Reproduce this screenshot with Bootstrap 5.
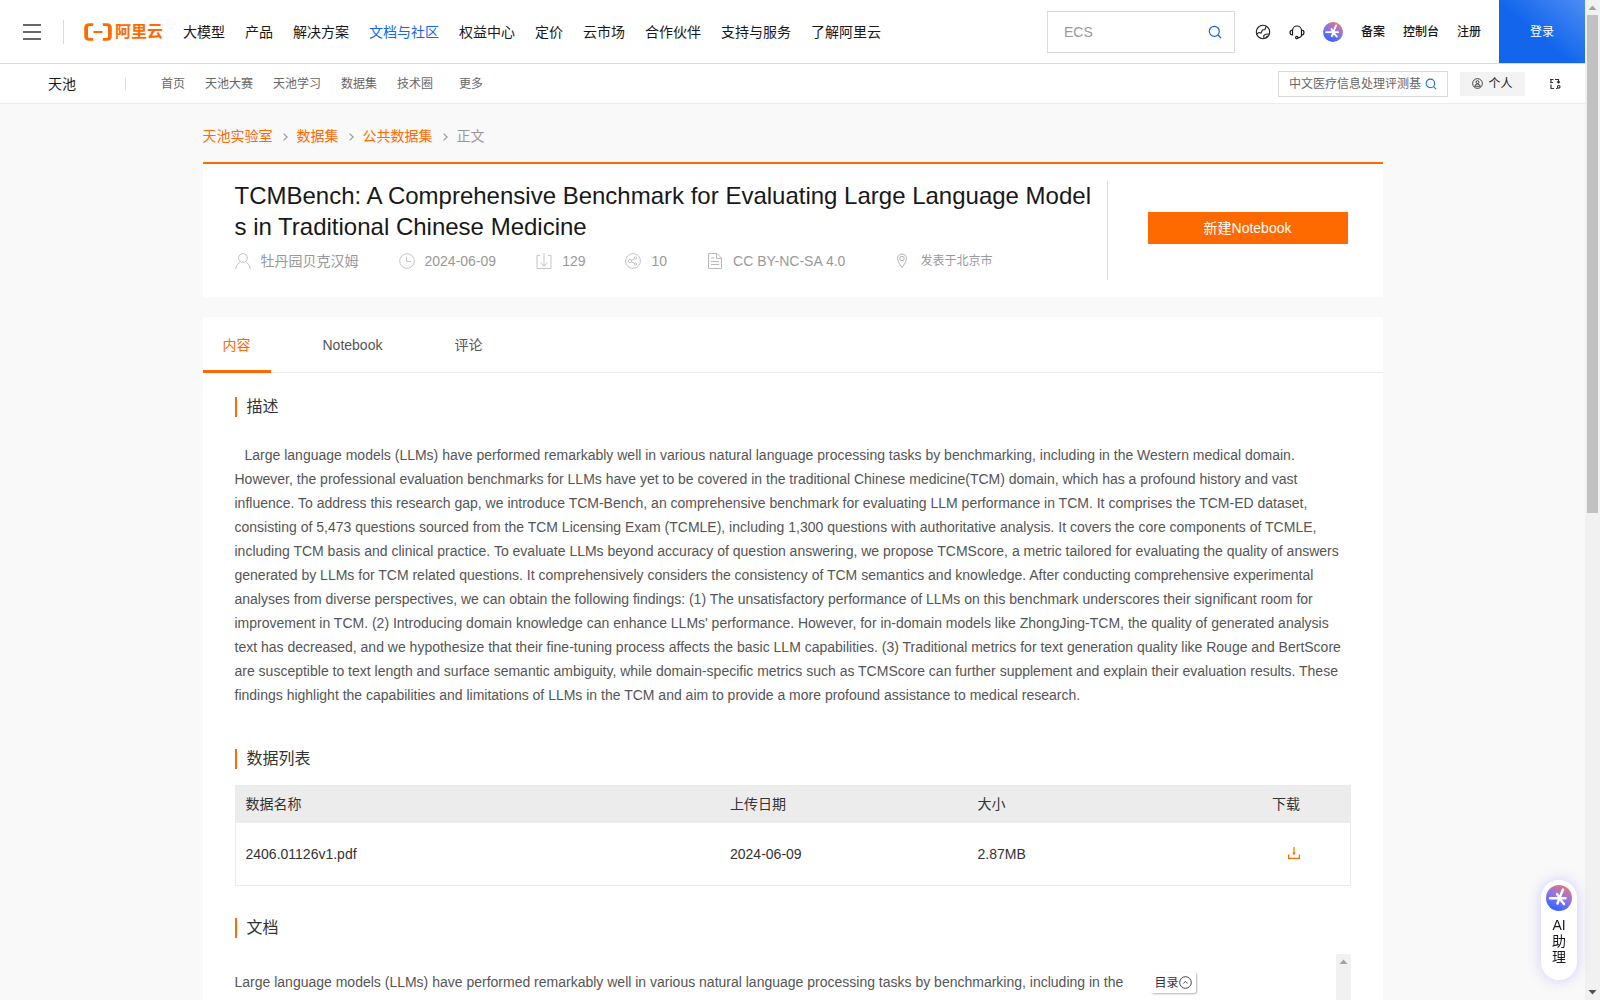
<!DOCTYPE html>
<html lang="zh-CN">
<head>
<meta charset="utf-8">
<meta name="viewport" content="width=device-width, initial-scale=1">
<title>TCMBench - 天池数据集</title>
<link href="https://cdn.jsdelivr.net/npm/bootstrap@5.3.0/dist/css/bootstrap.min.css" rel="stylesheet">
<style>
:root { --brand: #ff6a00; --blue: #1366ec; }
body { font-family: "Liberation Sans", "Noto Sans CJK SC", sans-serif; font-size: 14px; line-height: 24px; color: #181818; background: #fff; }
a { text-decoration: none; color: inherit; }
svg { display: block; flex: none; }
.view { background: #f9f9f9; min-width: 0; }
.rail { width: 15px; background: #f1f1f1; flex: none; }
.rail-thumb { width: 11px; height: 498px; background: #c1c1c1; }
.rail-cap { height: 15px; width: 15px; }
.topbar { height: 64px; border-bottom: 1px solid #d9d9d9; }
.menu-btn { padding: 0; border: 0; background: none; margin: 0 22px 0 23px; }
.sep-top { width: 1px; height: 24px; background: #d9d9d9; margin-right: 20px; }
.logo { color: var(--brand); font-size: 16px; font-weight: 700; gap: 3px; margin-right: 20px; }
.main-menu { gap: 20px; white-space: nowrap; }
.main-menu .current { color: var(--blue); }
.find { border: 1px solid #d9d9d9; background: #fff; }
.find input { border: 0; outline: 0; padding: 0; min-width: 0; background: none; flex: 1; }
.find button, .tool-btn { border: 0; background: none; padding: 0; }
.find input::placeholder { color: #999; opacity: 1; }
.find-top { width: 188px; height: 42px; padding: 0 12px 0 16px; }
.find-sub { width: 170px; height: 26px; padding: 0 10px; font-size: 12px; gap: 4px; }
.find-sub input::placeholder { color: #666; }
.quick { gap: 18px; font-size: 12px; font-weight: 500; margin: 0 18px 0 20px; }
.login { width: 86px; font-size: 12px; color: #fff; background: linear-gradient(40deg, var(--blue) 45%, #4d8cf4); }
.subbar { height: 40px; border-bottom: 1px solid #ebebeb; padding: 0 24px 0 48px; font-size: 12px; }
.subbar h2 { font-size: 14px; font-weight: 400; line-height: 24px; width: 77px; }
.sep-sub { width: 1px; height: 12px; background: #d9d9d9; margin-right: 35px; }
.sub-menu { gap: 20px; color: #666; }
.sub-menu .more { margin-left: 6px; }
.mine { width: 65px; height: 24px; background: #f3f3f3; border: 0; font-size: 12px; gap: 5px; margin: 0 24px 0 12px; color: #181818; }
.wrap { max-width: 1180px; }
.crumbs { color: #999; height: 58px; padding-top: 5px; }
.crumbs a { color: var(--brand); }
.crumbs svg { margin: 2px 9px 0 10px; }
.sheet { background: #fff; }
.hero { border-top: 2px solid var(--brand); padding: 17px 35px 17px 32px; height: 135px; margin-bottom: 20px; }
.hero h1 { font-size: 24px; line-height: 31px; font-weight: 400; word-break: break-all; margin: -1px 0 9px; }
.hero-side { border-left: 1px solid #e0e0e0; width: 241px; padding-bottom: 6px; }
.hero-main { padding-right: 14px; }
.new-btn { width: 200px; height: 32px; background: var(--brand); border: 0; color: #fff; }
.facts { gap: 40px; color: #999; line-height: 20px; white-space: nowrap; }
.facts > span { display: flex; align-items: center; gap: 10px; }
.facts .place { font-size: 12px; margin-left: 9px; }
.tabs { border-bottom: 1px solid #ebebeb; height: 56px; gap: 32px; }
.tabs button { border: 0; background: none; color: #555; padding: 0 20px; height: 56px; border-bottom: 3px solid transparent; border-top: 3px solid transparent; }
.tabs .on { color: var(--brand); border-bottom-color: var(--brand); }
.inner { padding: 24px 32px 0; }
.title { font-size: 16px; line-height: 20px; font-weight: 400; color: #333; border-left: 2px solid var(--brand); padding-left: 10px; margin: 0; }
.prose { color: #555; margin: 0; }
.abstract { text-indent: 10px; margin: 26px 0 42px; }
.files { border: 1px solid #ebebeb; margin: 16px 0 32px; color: #333; table-layout: fixed; width: 100%; }
.files th { font-weight: 400; background: #ececec; height: 37px; padding: 0 10px; }
.files td { height: 63px; padding: 0 10px; }
.doc { margin-top: 16px; height: 600px; overflow: hidden; }
.doc-text { padding-top: 16px; }
.doc-side { width: 196px; padding: 18px 0 0 11px; flex: none; }
.toc { border: 0; border-radius: 2px; background: #fff; width: 45px; height: 21px; padding: 0; font-size: 12px; line-height: 20px; color: #333; box-shadow: 1px 1px 2px rgba(0,0,0,.3); }
.helper { position: fixed; right: 23px; bottom: 20px; width: 36px; height: 100px; border-radius: 18px; border: 0; background: #fff; padding: 5px 0 0; line-height: 16px; color: #181818; box-shadow: 0 0 14px rgba(110,100,255,.3); }
.helper span { width: 14px; margin-top: 6px; }
</style>
<script src="https://cdn.jsdelivr.net/npm/bootstrap@5.3.0/dist/js/bootstrap.bundle.min.js"></script>
</head>
<body>
<svg width="0" height="0" class="position-absolute" aria-hidden="true">
  <defs>
    <linearGradient id="ball" x1=".3" y1="1" x2=".75" y2="0"><stop offset="0" stop-color="#2b62ff"/><stop offset=".5" stop-color="#8a74ee"/><stop offset="1" stop-color="#e8776f"/></linearGradient>
    <symbol id="lens" viewBox="0 0 14 14"><circle cx="6.3" cy="6.3" r="5" fill="none" stroke="#1366ec" stroke-width="1.2"/><path d="M10 10l3 3" stroke="#1366ec" stroke-width="1.2"/></symbol>
    <symbol id="spark" viewBox="0 0 26 26"><circle cx="13" cy="13" r="13" fill="url(#ball)"/><path d="M4 13.200h15.500M17 4.500l-3.500 8.500M11 9l2.500 4-2 5.500M13.500 13.500l4.500 5.500" fill="none" stroke="#fff" stroke-width="2.400" stroke-linecap="round"/></symbol>
  </defs>
</svg>
<div class="d-flex vh-100 overflow-hidden">
  <div class="view flex-grow-1 overflow-hidden">
    <header class="topbar d-flex align-items-center bg-white">
      <button class="menu-btn" type="button" aria-label="菜单"><svg width="18" height="18" viewBox="0 0 18 18"><path d="M0 2h18M0 9h18M0 16h18" stroke="#666" stroke-width="2"/></svg></button>
      <span class="sep-top"></span>
      <a href="#" class="logo d-flex align-items-center"><svg width="28" height="18" viewBox="0 0 28 18"><path d="M9.500.2L8.800 3H5.500Q4 3 4 4.500v9Q4 15 5.500 15h3.300l.7 2.800H5Q.2 17.800.2 13V5Q.2.2 5 .2zM18.500.2l.7 2.800h3.300Q24 3 24 4.500v9q0 1.500-1.500 1.500h-3.300l-.7 2.800H23q4.800 0 4.800-4.800V5Q27.800.2 23 .2z" fill="#ff6a00"/><path d="M9.500 9h9" stroke="#ff6a00" stroke-width="2"/></svg><span>阿里云</span></a>
      <nav class="main-menu d-flex">
        <a href="#">大模型</a><a href="#">产品</a><a href="#">解决方案</a><a href="#" class="current">文档与社区</a><a href="#">权益中心</a><a href="#">定价</a><a href="#">云市场</a><a href="#">合作伙伴</a><a href="#">支持与服务</a><a href="#">了解阿里云</a>
      </nav>
      <form class="find find-top d-flex align-items-center ms-auto"><input type="text" placeholder="ECS" aria-label="搜索"><button type="button" aria-label="搜索"><svg width="14" height="14"><use href="#lens"/></svg></button></form>
      <div class="quick d-flex align-items-center">
        <a href="#" aria-label="语言"><svg width="16" height="16" viewBox="0 0 16 16" fill="none" stroke="#222" stroke-width="1.100"><circle cx="8" cy="8" r="6.700"/><path d="M1.500 10l2.500-1.500 2 .5 1.500-3 2.500-.5 1-3M9 14.500l-.3-2.700 1.800-1.600 3.500-.2M11 13.500l1.500-1.500"/></svg></a>
        <a href="#" aria-label="支持"><svg width="16" height="16" viewBox="0 0 16 16" fill="none" stroke="#181818" stroke-width="1.200"><path d="M3.500 6.500a4.500 4.500 0 0 1 9 0M3.500 6v5Q1 11 1 8.500T3.500 6M12.500 6v5q2.500 0 2.500-2.500T12.500 6M12.500 11q0 2.500-3.500 2.800"/><circle cx="7.800" cy="13.500" r="1.200"/></svg></a>
        <a href="#" aria-label="AI 助理"><svg width="20" height="20"><use href="#spark"/></svg></a>
        <a href="#">备案</a><a href="#">控制台</a><a href="#">注册</a>
      </div>
      <a href="#" class="login d-flex align-items-center justify-content-center align-self-stretch">登录</a>
    </header>
    <div class="subbar d-flex align-items-center bg-white">
      <h2 class="m-0">天池</h2><span class="sep-sub"></span>
      <nav class="sub-menu d-flex"><a href="#">首页</a><a href="#">天池大赛</a><a href="#">天池学习</a><a href="#">数据集</a><a href="#">技术圈</a><a href="#" class="more">更多</a></nav>
      <form class="find find-sub d-flex align-items-center ms-auto"><input type="text" placeholder="中文医疗信息处理评测基准" aria-label="站内搜索"><button type="button" aria-label="站内搜索"><svg width="12" height="12"><use href="#lens"/></svg></button></form>
      <button class="mine d-flex align-items-center justify-content-center p-0" type="button"><svg width="11" height="11" viewBox="0 0 12 12" fill="none" stroke="#333"><circle cx="6" cy="6" r="5.300"/><circle cx="6" cy="4.500" r="1.600"/><path d="M3 9q.5-2.500 3-2.500T9 9z"/></svg>个人</button>
      <button class="tool-btn" type="button" aria-label="切换"><svg width="12" height="12" viewBox="0 0 12 12" fill="none" stroke="#333" stroke-width="1.200"><path d="M1 1.500h3.500M2 1.500V5M1 4.500h3M2 6.500v4h3M6 1.500h3.500V5M8 3.500l1.500 1.500L11 3.500M7 10.500h1.500"/><circle cx="9.700" cy="8.800" r="1.300"/></svg></button>
    </div>
    <main class="wrap mx-auto">
      <nav class="crumbs d-flex align-items-center" aria-label="路径">
        <a href="#">天池实验室</a><svg width="5" height="8" viewBox="0 0 5 8"><path d="M.6.600L4.200 4 .6 7.400" fill="none" stroke="#999" stroke-width="1.200"/></svg>
        <a href="#">数据集</a><svg width="5" height="8" viewBox="0 0 5 8"><path d="M.6.600L4.200 4 .6 7.400" fill="none" stroke="#999" stroke-width="1.200"/></svg>
        <a href="#">公共数据集</a><svg width="5" height="8" viewBox="0 0 5 8"><path d="M.6.600L4.200 4 .6 7.400" fill="none" stroke="#999" stroke-width="1.200"/></svg>
        <span>正文</span>
      </nav>
      <section class="sheet hero d-flex">
        <div class="hero-main flex-grow-1">
          <h1>TCMBench: A Comprehensive Benchmark for Evaluating Large Language Models in Traditional Chinese Medicine</h1>
          <div class="facts d-flex">
            <span><svg width="16" height="16" viewBox="0 0 16 16" fill="none" stroke="#c4c4c4"><circle cx="8" cy="5" r="4.400"/><path d="M.6 16q.4-5 4.600-7M15.400 16q-.4-5-4.600-7"/></svg>牡丹园贝克汉姆</span>
            <span><svg width="16" height="16" viewBox="0 0 16 16" fill="none" stroke="#c4c4c4"><circle cx="8" cy="8" r="7.300"/><path d="M7.500 3.500v5h4.500"/></svg>2024-06-09</span>
            <span><svg width="16" height="16" viewBox="0 0 16 16" fill="none" stroke="#c4c4c4"><path d="M4 2.500H1v13h14v-13h-3M8 0v13M4.500 9.500L8 13l3.500-3.500"/></svg>129</span>
            <span><svg width="16" height="16" viewBox="0 0 16 16" fill="none" stroke="#c4c4c4"><circle cx="8" cy="8" r="7.400"/><circle cx="5" cy="8" r="1.700"/><circle cx="10.500" cy="5" r="1.200"/><circle cx="10.500" cy="11" r="1.200"/><path d="M6.500 7.200l3-1.600M6.500 8.800l3 1.600"/></svg>10</span>
            <span><svg width="16" height="16" viewBox="0 0 16 16" fill="none" stroke="#b8b8b8"><path d="M1.500.5h8.500l4.500 4.500v10.500h-13zM9.500.5V5.500h5M4 5h3M4 8.500h8M4 11.500h8"/></svg>CC BY-NC-SA 4.0</span>
            <span class="place"><svg width="16" height="16" viewBox="0 0 16 16" fill="none" stroke="#b0b0b0"><path d="M8 14.500Q3.500 9 3.500 5.500a4.500 4.500 0 0 1 9 0Q12.500 9 8 14.500z"/><circle cx="8" cy="5.500" r="2.200"/></svg>发表于北京市</span>
          </div>
        </div>
        <div class="hero-side d-flex align-items-center justify-content-end flex-shrink-0"><button class="new-btn" type="button">新建Notebook</button></div>
      </section>
      <section class="sheet">
        <div class="tabs d-flex" role="tablist"><button class="on" type="button" role="tab">内容</button><button type="button" role="tab">Notebook</button><button type="button" role="tab">评论</button></div>
        <div class="inner">
          <h2 class="title">描述</h2>
          <p class="prose abstract">Large language models (LLMs) have performed remarkably well in various natural language processing tasks by benchmarking, including in the Western medical domain. However, the professional evaluation benchmarks for LLMs have yet to be covered in the traditional Chinese medicine(TCM) domain, which has a profound history and vast influence. To address this research gap, we introduce TCM-Bench, an comprehensive benchmark for evaluating LLM performance in TCM. It comprises the TCM-ED dataset, consisting of 5,473 questions sourced from the TCM Licensing Exam (TCMLE), including 1,300 questions with authoritative analysis. It covers the core components of TCMLE, including TCM basis and clinical practice. To evaluate LLMs beyond accuracy of question answering, we propose TCMScore, a metric tailored for evaluating the quality of answers generated by LLMs for TCM related questions. It comprehensively considers the consistency of TCM semantics and knowledge. After conducting comprehensive experimental analyses from diverse perspectives, we can obtain the following findings: (1) The unsatisfactory performance of LLMs on this benchmark underscores their significant room for improvement in TCM. (2) Introducing domain knowledge can enhance LLMs' performance. However, for in-domain models like ZhongJing-TCM, the quality of generated analysis text has decreased, and we hypothesize that their fine-tuning process affects the basic LLM capabilities. (3) Traditional metrics for text generation quality like Rouge and BertScore are susceptible to text length and surface semantic ambiguity, while domain-specific metrics such as TCMScore can further supplement and explain their evaluation results. These findings highlight the capabilities and limitations of LLMs in the TCM and aim to provide a more profound assistance to medical research.</p>
          <h2 class="title">数据列表</h2>
          <table class="files">
            <colgroup><col style="width:43.500%"><col style="width:22.200%"><col style="width:26.400%"><col></colgroup>
            <thead><tr><th scope="col">数据名称</th><th scope="col">上传日期</th><th scope="col">大小</th><th scope="col">下载</th></tr></thead>
            <tbody><tr><td>2406.01126v1.pdf</td><td>2024-06-09</td><td>2.87MB</td><td><a href="#" class="d-inline-block ms-3" aria-label="下载 2406.01126v1.pdf"><svg width="12" height="12" viewBox="0 0 12 12" fill="none" stroke="#ff6a00" stroke-width="1.200"><path d="M.6 7.500v3.900h10.800V7.500M6 0v7"/><path d="M4.300 5.500h3.400L6 8.500z" fill="#ff6a00" stroke="none"/></svg></a></td></tr></tbody>
          </table>
          <h2 class="title">文档</h2>
          <div class="doc d-flex">
            <p class="prose doc-text flex-grow-1">Large language models (LLMs) have performed remarkably well in various natural language processing tasks by benchmarking, including in the</p>
            <div class="doc-side"><button class="toc d-flex align-items-center justify-content-center" type="button">目录<svg width="13" height="13" viewBox="0 0 13 13" fill="none" stroke="#444"><circle cx="6.500" cy="6.500" r="5.800"/><path d="M4.300 7.500l2.200-2.200 2.200 2.200"/></svg></button></div>
            <div class="rail"><svg width="15" height="15" viewBox="0 0 15 15"><path d="M3.500 10h8l-4-4.500z" fill="#a3a3a3"/></svg></div>
          </div>
        </div>
      </section>
    </main>
  </div>
  <div class="rail d-flex flex-column align-items-center">
    <svg class="rail-cap" viewBox="0 0 15 15"><path d="M3.500 10h8l-4-4.500z" fill="#a3a3a3"/></svg>
    <div class="rail-thumb"></div>
    <svg class="rail-cap mt-auto" viewBox="0 0 15 15"><path d="M3.500 5h8l-4 4.500z" fill="#505050"/></svg>
  </div>
</div>
<button class="helper d-flex flex-column align-items-center" type="button"><svg width="26" height="26"><use href="#spark"/></svg><span>AI助理</span></button>
</body>
</html>
